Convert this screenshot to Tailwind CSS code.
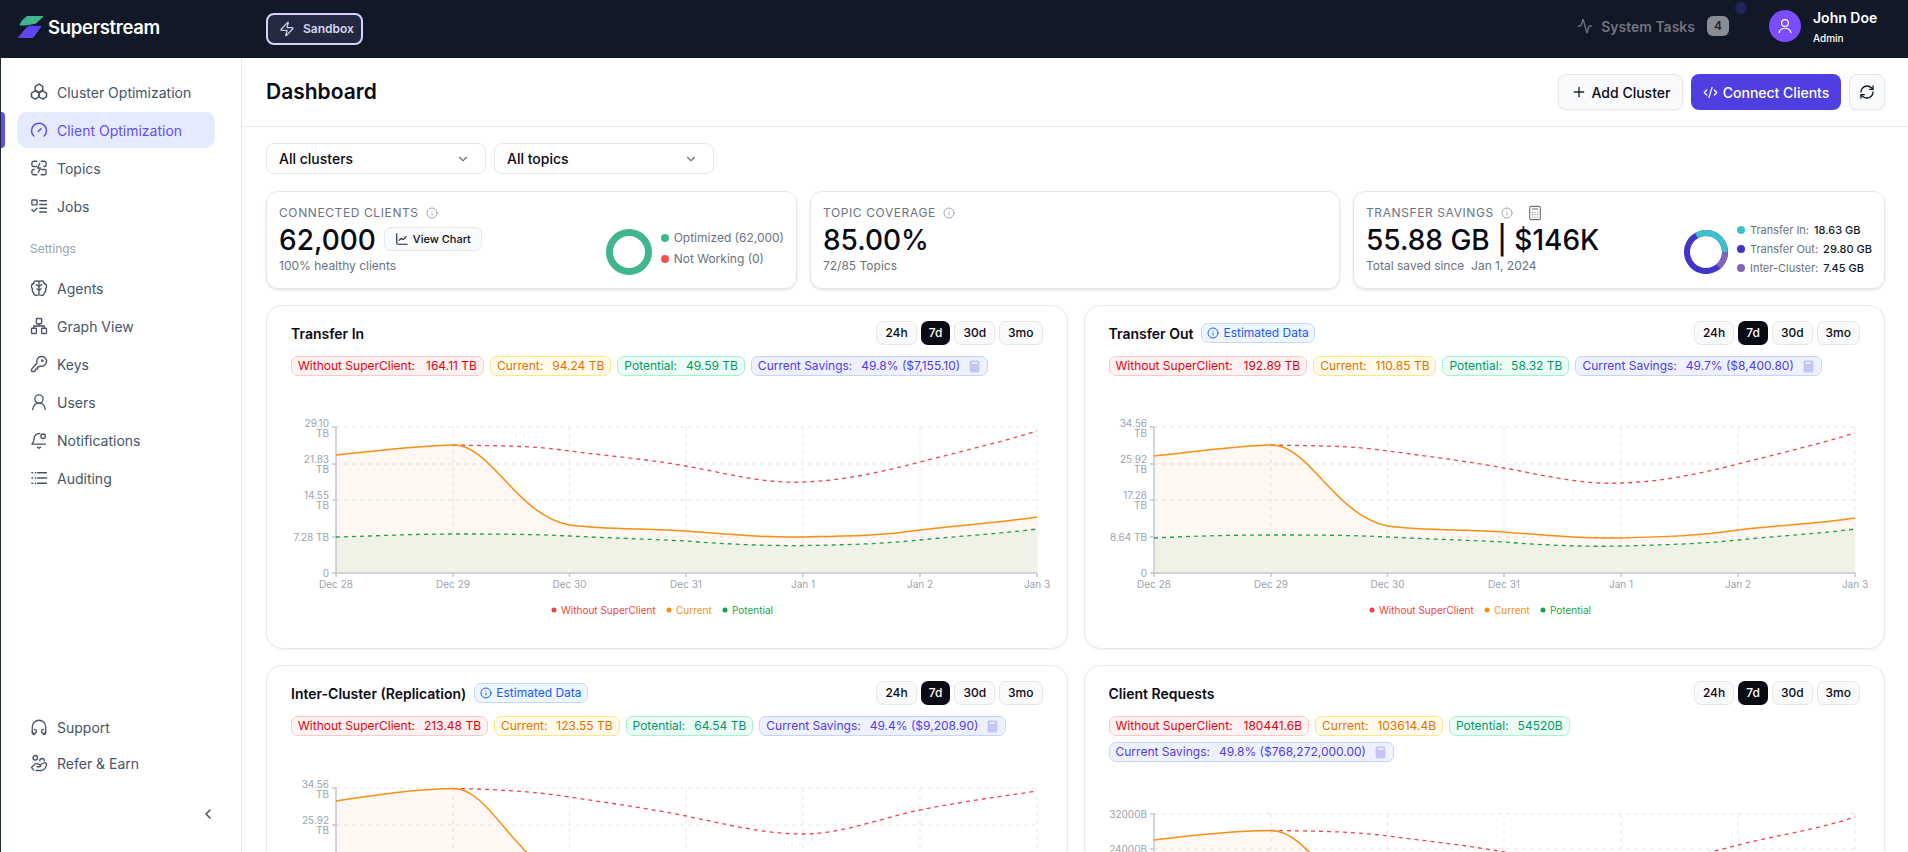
<!DOCTYPE html>
<html lang="en">
<head>
<meta charset="utf-8">
<title>Superstream Dashboard</title>
<script src="https://cdn.jsdelivr.net/npm/@tailwindcss/browser@4"></script>
</head>
<body class="overflow-hidden bg-white">
<div class="w-[1908px] h-[852px] overflow-hidden flex flex-col font-['Inter',sans-serif] text-[#0a0a14]">

<!-- Top bar -->
<header class="h-[58px] shrink-0 bg-[#111827] flex items-center relative">
  <div class="w-[266px] pl-[18px] pb-[5px] flex items-center gap-[4px]">
    <svg width="26" height="22" viewBox="0 0 26 22" stroke-width="1" stroke-linejoin="round"><path d="M9 .5H25L18 7L8 9H2L4 5Z" fill="#3fb68b" stroke="#3fb68b"/><path d="M11.500 10L23 10.500L15 21.500H.5L6 15L8 12.500Z" fill="#5f45f0" stroke="#5f45f0"/></svg>
    <span class="text-[18.500px] leading-[28px] font-semibold text-white tracking-[-0.3px]">Superstream</span>
  </div>
  <button class="w-[97px] h-[32px] rounded-[8px] border-2 border-[#d8d0fb] bg-[#232a40] flex items-center gap-[8px] pl-[11px] text-[12px] font-semibold text-[#d7d4f0]">
    <svg width="16" height="16" viewBox="0 0 24 24" fill="none" stroke="#d7d4f0" stroke-width="1.800" stroke-linecap="round" stroke-linejoin="round"><path d="M4 14a1 1 0 0 1-.78-1.630l9.900-10.200a.5.5 0 0 1 .86.460l-1.920 6.020A1 1 0 0 0 13 10h7a1 1 0 0 1 .78 1.630l-9.900 10.200a.5.5 0 0 1-.86-.460l1.920-6.020A1 1 0 0 0 11 14z"/></svg>
    Sandbox
  </button>
  <div class="ml-auto flex items-center pb-[6px]">
    <svg width="16" height="16" viewBox="0 0 24 24" fill="none" stroke="#6f737c" stroke-width="2" stroke-linecap="round" stroke-linejoin="round"><path d="M22 12h-2.480a2 2 0 0 0-1.930 1.460l-2.350 8.360a.25.25 0 0 1-.48 0L9.240 2.180a.25.25 0 0 0-.48 0l-2.350 8.360A2 2 0 0 1 4.490 12H2"/></svg>
    <span class="ml-[8px] text-[14px] font-semibold text-[#71757f]">System Tasks</span>
    <span class="ml-[12px] w-[22px] h-[20px] rounded-[6px] bg-[#8a8d93] text-[#1f2430] text-[12px] font-semibold flex items-center justify-center">4</span>
    <span class="ml-[40px] w-[32px] h-[32px] rounded-full bg-[#7c4dff] flex items-center justify-center">
      <svg width="18" height="18" viewBox="0 0 24 24" fill="none" stroke="#fff" stroke-width="1.600" stroke-linecap="round" stroke-linejoin="round"><circle cx="12" cy="8" r="4.500"/><path d="M4 21c1-4 4-6 8-6s7 2 8 6"/></svg>
    </span>
    <div class="ml-[12px] w-[95px] flex flex-col text-white">
      <span class="text-[14px] leading-[20px] font-semibold">John Doe</span>
      <span class="text-[10px] leading-[14px] mt-[3px] font-medium">Admin</span>
    </div>
  </div>
  <span class="absolute left-[1735px] top-[2px] w-[12px] h-[12px] rounded-full bg-[#1f2459]"></span>
</header>

<div class="flex-1 flex min-h-0">
  <!-- Sidebar -->
  <aside class="w-[242px] shrink-0 border-l border-l-[#1c2a2e] border-r border-r-[#e5e7eb] flex flex-col relative pt-[16px] text-[14px] text-[#475467]">
    <nav class="flex flex-col gap-[2px] ml-[16px] w-[198px]">
      <a class="h-[36px] flex items-center gap-[9px] px-[13px] rounded-[10px]">
        <svg width="18" height="18" viewBox="0 0 24 24" fill="none" stroke="#475467" stroke-width="2" stroke-linejoin="round"><path d="M12 1.500l5 2.900v5.200L12 12.500 7 9.600V4.400z"/><path d="M7 10.500l5 2.900v5.200l-5 2.900-5-2.900v-5.200z"/><path d="M17 10.500l5 2.900v5.200l-5 2.900-5-2.900v-5.200z"/></svg>
        <span>Cluster Optimization</span>
      </a>
      <a class="h-[36px] flex items-center gap-[9px] px-[13px] rounded-[10px] bg-[#e6eaff] text-[#5f4ff5]">
        <svg width="18" height="18" viewBox="0 0 24 24" fill="none" stroke="#5f4ff5" stroke-width="2" stroke-linecap="round"><path d="M5 20A10 10 0 1 1 19 20"/><path d="M11 14l3.500-3.500"/></svg>
        <span>Client Optimization</span>
      </a>
      <a class="h-[36px] flex items-center gap-[9px] px-[13px] rounded-[10px]">
        <svg width="18" height="18" viewBox="0 0 24 24" fill="none" stroke="#475467" stroke-width="1.800" stroke-linecap="round" stroke-linejoin="round"><path d="M9 3H5a2.500 2.500 0 0 0-2.500 2.500V8a2 2 0 0 0 2 2h4M15 3h4a2.500 2.500 0 0 1 2.500 2.500V8a2 2 0 0 1-2 2h-1M9 21H5a2.500 2.500 0 0 1-2.500-2.500V16a2 2 0 0 1 2-2h1M15 21h4a2.500 2.500 0 0 0 2.500-2.500V16a2 2 0 0 0-2-2h-4"/><path d="M13 6l-3 6h4l-3 6"/></svg>
        <span>Topics</span>
      </a>
      <a class="h-[36px] flex items-center gap-[9px] px-[13px] rounded-[10px]">
        <svg width="18" height="18" viewBox="0 0 24 24" fill="none" stroke="#475467" stroke-width="1.800" stroke-linecap="round" stroke-linejoin="round"><rect x="2.500" y="4" width="7" height="6.500" rx="1"/><path d="M13 5h9M13 10h9M13 15h9M13 20h9M2.500 17l2.500 2.500L9.500 15"/></svg>
        <span>Jobs</span>
      </a>
    </nav>
    <div class="mx-[29px] mt-[17px] h-[16px] leading-[16px] text-[12px] text-[#98a2b3]">Settings</div>
    <nav class="flex flex-col gap-[2px] ml-[16px] w-[198px] mt-[13px]">
      <a class="h-[36px] flex items-center gap-[9px] px-[13px] rounded-[10px]">
        <svg width="18" height="18" viewBox="0 0 24 24" fill="none" stroke="#475467" stroke-width="1.800" stroke-linecap="round" stroke-linejoin="round"><path d="M12 3v18M8 2.500a3.500 3.500 0 0 0-3 3.500 4 4 0 0 0-3 4c0 1.500.6 2.500 1.500 3A4 4 0 0 0 5 18.500 3.500 3.500 0 0 0 8 22c2 0 4-1 4-1s2 1 4 1a3.500 3.500 0 0 0 3-3.500 4 4 0 0 0 1.500-5.500c.9-.5 1.500-1.500 1.500-3a4 4 0 0 0-3-4 3.500 3.500 0 0 0-3-3.500c-2 0-4 .5-4 .5s-2-.5-4-.5z"/><path d="M12 10L8.500 7.500M12 10l3.500-2.500M12 15l-3-2M12 15l3-2"/></svg>
        <span>Agents</span>
      </a>
      <a class="h-[36px] flex items-center gap-[9px] px-[13px] rounded-[10px]">
        <svg width="18" height="18" viewBox="0 0 24 24" fill="none" stroke="#475467" stroke-width="1.800" stroke-linecap="round" stroke-linejoin="round"><rect x="8.500" y="2" width="7" height="7" rx="1"/><rect x="2" y="15" width="6.500" height="7" rx="1"/><rect x="15.500" y="15" width="6.500" height="7" rx="1"/><path d="M5 15v-3h14v3M12 12V9"/></svg>
        <span>Graph View</span>
      </a>
      <a class="h-[36px] flex items-center gap-[9px] px-[13px] rounded-[10px]">
        <svg width="18" height="18" viewBox="0 0 24 24" fill="none" stroke="#475467" stroke-width="1.800" stroke-linecap="round" stroke-linejoin="round"><path d="M2.600 18.400A2 2 0 0 0 2 19.800V21a1 1 0 0 0 1 1h3a1 1 0 0 0 1-1v-1a1 1 0 0 1 1-1h1a1 1 0 0 0 1-1v-1a1 1 0 0 1 1-1h.2a2 2 0 0 0 1.400-.6l.8-.8a6.500 6.500 0 1 0-4-4z"/><circle cx="16.500" cy="7.500" r=".8"/></svg>
        <span>Keys</span>
      </a>
      <a class="h-[36px] flex items-center gap-[9px] px-[13px] rounded-[10px]">
        <svg width="18" height="18" viewBox="0 0 24 24" fill="none" stroke="#475467" stroke-width="1.800" stroke-linecap="round" stroke-linejoin="round"><circle cx="12" cy="8" r="5.500"/><path d="M3.500 22c.7-5 4-8.500 8.500-8.500s7.800 3.500 8.500 8.500"/></svg>
        <span>Users</span>
      </a>
      <a class="h-[36px] flex items-center gap-[9px] px-[13px] rounded-[10px]">
        <svg width="18" height="18" viewBox="0 0 24 24" fill="none" stroke="#475467" stroke-width="1.800" stroke-linecap="round" stroke-linejoin="round"><path d="M13 3.500a6.500 6.500 0 0 0-7.500 6.500c0 4.500-2 6-3 7.500h18"/><circle cx="17.500" cy="7" r="3"/><path d="M10 21.500l2 1.500 2-1.500"/></svg>
        <span>Notifications</span>
      </a>
      <a class="h-[36px] flex items-center gap-[9px] px-[13px] rounded-[10px]">
        <svg width="18" height="18" viewBox="0 0 24 24" fill="none" stroke="#475467" stroke-width="1.800" stroke-linecap="round"><path d="M10 5h12M10 12h12M10 19h12M2.500 5h1M7 5h.5M2.500 12h1M7 12h.5M2.500 19h1M7 19h.5"/></svg>
        <span>Auditing</span>
      </a>
    </nav>
    <nav class="flex flex-col mt-auto ml-[16px] w-[198px] mb-[30px]">
      <a class="h-[36px] flex items-center gap-[9px] px-[13px] rounded-[10px]">
        <svg width="18" height="18" viewBox="0 0 24 24" fill="none" stroke="#475467" stroke-width="1.700" stroke-linecap="round"><path d="M3 19v-7a9 9 0 0 1 18 0v7"/><path d="M3 18a2.800 2.800 0 1 0 2.800-2.800M3 19c0 1.500 1 3 3 3M21 18a2.800 2.800 0 1 1-2.800-2.800M21 19c0 1.500-1 3-3 3"/></svg>
        <span>Support</span>
      </a>
      <a class="h-[36px] flex items-center gap-[9px] px-[13px] rounded-[10px]">
        <svg width="18" height="18" viewBox="0 0 24 24" fill="none" stroke="#475467" stroke-width="1.800" stroke-linecap="round" stroke-linejoin="round"><circle cx="7" cy="5" r="3"/><path d="M2 18l3.500-3.500c1.500-1.500 4-2 6-1l2 1c1.200.6.800 2.500-.7 2.500H9.500M5 21.500l-3-3.500M8 22h7c3 0 7-4 7-8 0-2-2-3-4-2l-3 1.500"/><path d="M13 9a3 3 0 0 1 6 0"/></svg>
        <span>Refer &amp; Earn</span>
      </a>
      <div class="flex justify-end mt-[25px] h-[16px]">
        <svg class="mr-[-1px]" width="16" height="16" viewBox="0 0 24 24" fill="none" stroke="#475467" stroke-width="2.400" stroke-linecap="round" stroke-linejoin="round"><path d="m15 18-6-6 6-6"/></svg>
      </div>
    </nav>
    <span class="absolute left-0 top-[54px] w-[4px] h-[36px] rounded-r-[4px] bg-[#5f4ff5]"></span>
  </aside>

  <!-- Main -->
  <main class="flex-1 min-w-0 overflow-hidden">
    <div class="h-[69px] border-b border-[#e5e7eb] pl-[24px] pr-[23px] flex items-center justify-between">
      <h1 class="text-[21px] font-semibold leading-[32px]">Dashboard</h1>
      <div class="flex items-center gap-[8px]">
        <button class="h-[36px] w-[125px] rounded-[8px] border border-[#e5e7eb] bg-[#f9fafb] shadow-xs flex items-center justify-center gap-[5px] text-[14px] font-medium">
          <svg width="16" height="16" viewBox="0 0 24 24" fill="none" stroke="#1f2430" stroke-width="2" stroke-linecap="round"><path d="M5 12h14M12 5v14"/></svg>Add Cluster
        </button>
        <button class="h-[36px] w-[150px] rounded-[8px] bg-[#4f3fe0] flex items-center justify-center gap-[5px] text-[14px] font-medium text-white">
          <svg width="15" height="15" viewBox="0 0 24 24" fill="none" stroke="#fff" stroke-width="2" stroke-linecap="round" stroke-linejoin="round"><path d="m18 16 4-4-4-4M6 8l-4 4 4 4M14.500 4l-5 16"/></svg>Connect Clients
        </button>
        <button class="h-[36px] w-[36px] rounded-[8px] border border-[#e5e7eb] bg-[#f9fafb] shadow-xs flex items-center justify-center">
          <svg width="16" height="16" viewBox="0 0 24 24" fill="none" stroke="#111827" stroke-width="2" stroke-linecap="round" stroke-linejoin="round"><path d="M3 12a9 9 0 0 1 9-9 9.750 9.750 0 0 1 6.740 2.740L21 8"/><path d="M21 3v5h-5"/><path d="M21 12a9 9 0 0 1-9 9 9.750 9.750 0 0 1-6.740-2.740L3 16"/><path d="M8 16H3v5"/></svg>
        </button>
      </div>
    </div>

    <div class="pl-[24px] pr-[23px] pt-[16px]">
      <!-- Filters -->
      <div class="flex gap-[8px]">
        <button class="w-[220px] h-[31px] rounded-[8px] border border-[#e5e7eb] flex items-center justify-between pl-[12px] pr-[15px] text-[14px] font-medium">All clusters
          <svg width="14" height="14" viewBox="0 0 24 24" fill="none" stroke="#6b7280" stroke-width="2" stroke-linecap="round" stroke-linejoin="round"><path d="m6 9 6 6 6-6"/></svg>
        </button>
        <button class="w-[220px] h-[31px] rounded-[8px] border border-[#e5e7eb] flex items-center justify-between pl-[12px] pr-[15px] text-[14px] font-medium">All topics
          <svg width="14" height="14" viewBox="0 0 24 24" fill="none" stroke="#6b7280" stroke-width="2" stroke-linecap="round" stroke-linejoin="round"><path d="m6 9 6 6 6-6"/></svg>
        </button>
      </div>

      <!-- Stat cards -->
      <div class="grid grid-cols-[531px_530px_1fr] gap-[13px] mt-[17px]">
        <div class="h-[98px] rounded-[12px] border border-[#e5e7eb] shadow-sm px-[12px] pt-[13px] flex justify-between">
          <div>
            <div class="flex items-center gap-[7px] h-[16px] text-[12px] tracking-[0.6px] text-[#6b7280]">CONNECTED CLIENTS
              <svg width="12" height="12" viewBox="0 0 24 24" fill="none" stroke="#9ca3af" stroke-width="2" stroke-linecap="round"><circle cx="12" cy="12" r="10"/><path d="M12 16v-4M12 8h.01"/></svg>
            </div>
            <div class="flex items-center mt-[1px] h-[36px]">
              <span class="text-[28px] leading-[36px] font-medium">62,000</span>
              <button class="ml-[8px] mb-[2px] w-[98px] h-[24px] rounded-[7px] border border-[#e5e7eb] bg-[#f9fafb] flex items-center justify-center gap-[4px] text-[11px] font-medium">
                <svg width="14" height="14" viewBox="0 0 24 24" fill="none" stroke="#1f2430" stroke-width="2" stroke-linecap="round" stroke-linejoin="round"><path d="M3 3v16a2 2 0 0 0 2 2h16"/><path d="m7 14 4-3 3 2 5-5"/></svg>View Chart
              </button>
            </div>
            <div class="text-[12px] leading-[16px] text-[#6b7280]">100% healthy clients</div>
          </div>
          <div class="flex items-center gap-[9px] mb-[9px]">
            <svg width="46" height="46" viewBox="0 0 46 46" class="mt-[19px]"><circle cx="23" cy="23" r="19.500" fill="none" stroke="#3fb68b" stroke-width="7"/></svg>
            <div class="flex flex-col gap-[5px] text-[12px] leading-[16px] text-[#6b7280] mt-[13px]">
              <div class="flex items-center gap-[5px]"><span class="w-[8px] h-[8px] rounded-full bg-[#3fb68b]"></span>Optimized (62,000)</div>
              <div class="flex items-center gap-[5px]"><span class="w-[8px] h-[8px] rounded-full bg-[#ef5350]"></span>Not Working (0)</div>
            </div>
          </div>
        </div>

        <div class="h-[98px] rounded-[12px] border border-[#e5e7eb] shadow-sm px-[12px] pt-[13px]">
          <div class="flex items-center gap-[7px] h-[16px] text-[12px] tracking-[0.6px] text-[#6b7280]">TOPIC COVERAGE
            <svg width="12" height="12" viewBox="0 0 24 24" fill="none" stroke="#9ca3af" stroke-width="2" stroke-linecap="round"><circle cx="12" cy="12" r="10"/><path d="M12 16v-4M12 8h.01"/></svg>
          </div>
          <div class="mt-[1px] text-[28px] leading-[36px] font-medium">85.00%</div>
          <div class="text-[12px] leading-[16px] text-[#6b7280]">72/85 Topics</div>
        </div>

        <div class="h-[98px] rounded-[12px] border border-[#e5e7eb] shadow-sm px-[12px] pt-[13px] flex justify-between">
          <div>
            <div class="flex items-center h-[16px] text-[12px] tracking-[0.6px] text-[#6b7280]">TRANSFER SAVINGS
              <svg class="ml-[7px]" width="12" height="12" viewBox="0 0 24 24" fill="none" stroke="#9ca3af" stroke-width="2" stroke-linecap="round"><circle cx="12" cy="12" r="10"/><path d="M12 16v-4M12 8h.01"/></svg>
              <svg class="ml-[14px]" width="16" height="16" viewBox="0 0 24 24" fill="none" stroke="#6b7280" stroke-width="1.700" stroke-linecap="round" stroke-linejoin="round"><rect x="4" y="2" width="16" height="20" rx="2"/><path d="M8 6h8M8 11h.01M12 11h.01M16 11h.01M8 14.500h.01M12 14.500h.01M16 14.500h.01M8 18h.01M12 18h.01M16 18h.01"/></svg>
            </div>
            <div class="mt-[1px] text-[28px] leading-[36px] font-medium">55.88 GB | $146K</div>
            <div class="text-[12px] leading-[16px] text-[#6b7280]">Total saved since&nbsp; Jan 1, 2024</div>
          </div>
          <div class="flex items-center gap-[9px] mb-[9px]">
            <svg width="44" height="44" viewBox="0 0 44 44" class="mt-[19px]">
              <g fill="none" stroke-width="6" transform="rotate(-120 22 22)">
                <circle cx="22" cy="22" r="19" stroke="#3f35c9"/>
                <circle cx="22" cy="22" r="19" stroke="#3cc1c8" stroke-dasharray="39.800 119.400"/>
                <circle cx="22" cy="22" r="19" stroke="#8463bf" stroke-dasharray="15.900 119.400" stroke-dashoffset="-39.800"/>
              </g>
            </svg>
            <div class="flex flex-col gap-[3px] text-[11px] leading-[16px] text-[#6b7280] mt-[13px]">
              <div class="flex items-center gap-[5px]"><span class="w-[8px] h-[8px] rounded-full bg-[#3cc1c8]"></span>Transfer In: <b class="font-medium text-[#111827]">18.63 GB</b></div>
              <div class="flex items-center gap-[5px]"><span class="w-[8px] h-[8px] rounded-full bg-[#3f35c9]"></span>Transfer Out: <b class="font-medium text-[#111827]">29.80 GB</b></div>
              <div class="flex items-center gap-[5px]"><span class="w-[8px] h-[8px] rounded-full bg-[#8463bf]"></span>Inter-Cluster: <b class="font-medium text-[#111827]">7.45 GB</b></div>
            </div>
          </div>
        </div>
      </div>

      <!-- Chart cards -->
      <div class="grid grid-cols-2 gap-[16px] mt-[16px]">

        <!-- Transfer In -->
        <section class="rounded-[16px] border border-[#e5e7eb] shadow-xs px-[24px] pt-[15px] pb-[18px]">
          <div class="flex items-center justify-between h-[24px]">
            <h2 class="text-[14px] font-semibold">Transfer In</h2>
            <div class="flex gap-[4px] text-[12px] font-medium">
              <span class="h-[24px] px-[8px] rounded-[7px] border border-[#e5e7eb] bg-[#f9fafb] flex items-center">24h</span>
              <span class="h-[24px] px-[8px] rounded-[7px] bg-[#0a0a14] text-white flex items-center">7d</span>
              <span class="h-[24px] px-[8px] rounded-[7px] border border-[#e5e7eb] bg-[#f9fafb] flex items-center">30d</span>
              <span class="h-[24px] px-[8px] rounded-[7px] border border-[#e5e7eb] bg-[#f9fafb] flex items-center">3mo</span>
            </div>
          </div>
          <div class="flex flex-wrap gap-[6px] mt-[11px] text-[12px]">
            <span class="h-[20px] px-[6px] rounded-[7px] border border-red-200 bg-red-50 text-red-600 flex items-center gap-[11px]">Without SuperClient: <span>164.11 TB</span></span>
            <span class="h-[20px] px-[6px] rounded-[7px] border border-amber-200 bg-amber-50 text-amber-600 flex items-center gap-[9px]">Current: <span>94.24 TB</span></span>
            <span class="h-[20px] px-[6px] rounded-[7px] border border-emerald-200 bg-emerald-50 text-emerald-600 flex items-center gap-[9px]">Potential: <span>49.59 TB</span></span>
            <span class="h-[20px] px-[6px] rounded-[7px] border border-indigo-200 bg-indigo-50 text-indigo-600 flex items-center gap-[9px]">Current Savings: <span>49.8% ($7,155.10)</span>
              <svg width="13" height="13" viewBox="0 0 24 24" class="ml-[-1px]"><rect x="3" y="1" width="18" height="22" rx="3" fill="#c3c6f5"/><rect x="7" y="4" width="10" height="3" fill="#eef2ff"/></svg></span>
          </div>
          <svg class="block overflow-visible mt-[14px]" width="752" height="240" viewBox="0 0 752 240" font-size="10" fill="#9ca3af">
            <g stroke="#e5e7eb" stroke-dasharray="4 4"><path d="M45 37H746M45 74H746M45 110H746M45 147H746M162 37V183M278.500 37V183M395 37V183M512 37V183M629 37V183M746 37V183"/></g>
            <path d="M45 65C84 61 123 56 162 55C200 54 225 125 278.500 135C317 140 356 138 395 141C434 144 473 148 512 147C551 146 590 146 629 140C668 135 707 133 746 127V183H45Z" fill="#fb923c" fill-opacity=".07"/>
            <path d="M45 147C84 146 123 144 162 144C201 144 240 144 278.500 146C317 148 356 149 395 151C434 154 473 156 512 155.500C551 155 590 154 629 150C668 146 707 144 746 139V183H45Z" fill="#f0f2e5"/>
            <path d="M41 37H45V183M41 74H45M41 110H45M41 147H45M41 183H746M45 183V187M162 183V187M278.500 183V187M395 183V187M512 183V187M629 183V187M746 183V187" fill="none" stroke="#c3c8d0" stroke-width="1.500"/>
            <path d="M162 55C201 56 240 55 278.500 61C317 66 356 69 395 76C434 83 473 94 512 92C551 91 590 82 629 72C668 62 707 53 746 41" fill="none" stroke="#ef4444" stroke-width="1.300" stroke-dasharray="4 4"/>
            <path d="M45 147C84 146 123 144 162 144C201 144 240 144 278.500 146C317 148 356 149 395 151C434 154 473 156 512 155.500C551 155 590 154 629 150C668 146 707 144 746 139" fill="none" stroke="#16a34a" stroke-width="1.300" stroke-dasharray="4 4"/>
            <path d="M45 65C84 61 123 56 162 55C200 54 225 125 278.500 135C317 140 356 138 395 141C434 144 473 148 512 147C551 146 590 146 629 140C668 135 707 133 746 127" fill="none" stroke="#f59012" stroke-width="1.500"/>
            <g text-anchor="end"><text x="38" y="37">29.10</text><text x="38" y="47">TB</text><text x="38" y="73">21.83</text><text x="38" y="83">TB</text><text x="38" y="109">14.55</text><text x="38" y="119">TB</text><text x="38" y="151">7.28 TB</text><text x="38" y="187">0</text></g>
            <g text-anchor="middle"><text x="45" y="198">Dec 28</text><text x="162" y="198">Dec 29</text><text x="278.500" y="198">Dec 30</text><text x="395" y="198">Dec 31</text><text x="512" y="198">Jan 1</text><text x="629" y="198">Jan 2</text><text x="746" y="198">Jan 3</text></g>
            <circle cx="263" cy="220" r="2.500" fill="#ef4444"/><text x="270" y="224" fill="#ef4444">Without SuperClient</text>
            <circle cx="378" cy="220" r="2.500" fill="#f59012"/><text x="385" y="224" fill="#f59012">Current</text>
            <circle cx="434" cy="220" r="2.500" fill="#16a34a"/><text x="441" y="224" fill="#16a34a">Potential</text>
          </svg>
        </section>

        <!-- Transfer Out -->
        <section class="rounded-[16px] border border-[#e5e7eb] shadow-xs px-[24px] pt-[15px] pb-[18px]">
          <div class="flex items-center justify-between h-[24px]">
            <div class="flex items-center gap-[8px]">
              <h2 class="text-[14px] font-semibold">Transfer Out</h2>
              <span class="h-[20px] px-[5px] rounded-[7px] border border-blue-200 bg-blue-50 text-blue-600 text-[12px] flex items-center gap-[4px]">
                <svg width="12" height="12" viewBox="0 0 24 24" fill="none" stroke="currentColor" stroke-width="2" stroke-linecap="round"><circle cx="12" cy="12" r="10"/><path d="M12 16v-4M12 8h.01"/></svg>Estimated Data</span>
            </div>
            <div class="flex gap-[4px] text-[12px] font-medium">
              <span class="h-[24px] px-[8px] rounded-[7px] border border-[#e5e7eb] bg-[#f9fafb] flex items-center">24h</span>
              <span class="h-[24px] px-[8px] rounded-[7px] bg-[#0a0a14] text-white flex items-center">7d</span>
              <span class="h-[24px] px-[8px] rounded-[7px] border border-[#e5e7eb] bg-[#f9fafb] flex items-center">30d</span>
              <span class="h-[24px] px-[8px] rounded-[7px] border border-[#e5e7eb] bg-[#f9fafb] flex items-center">3mo</span>
            </div>
          </div>
          <div class="flex flex-wrap gap-[6px] mt-[11px] text-[12px]">
            <span class="h-[20px] px-[6px] rounded-[7px] border border-red-200 bg-red-50 text-red-600 flex items-center gap-[11px]">Without SuperClient: <span>192.89 TB</span></span>
            <span class="h-[20px] px-[6px] rounded-[7px] border border-amber-200 bg-amber-50 text-amber-600 flex items-center gap-[9px]">Current: <span>110.85 TB</span></span>
            <span class="h-[20px] px-[6px] rounded-[7px] border border-emerald-200 bg-emerald-50 text-emerald-600 flex items-center gap-[9px]">Potential: <span>58.32 TB</span></span>
            <span class="h-[20px] px-[6px] rounded-[7px] border border-indigo-200 bg-indigo-50 text-indigo-600 flex items-center gap-[9px]">Current Savings: <span>49.7% ($8,400.80)</span>
              <svg width="13" height="13" viewBox="0 0 24 24" class="ml-[-1px]"><rect x="3" y="1" width="18" height="22" rx="3" fill="#c3c6f5"/><rect x="7" y="4" width="10" height="3" fill="#eef2ff"/></svg></span>
          </div>
          <svg class="block overflow-visible mt-[14px]" width="752" height="240" viewBox="0 0 752 240" font-size="10" fill="#9ca3af">
            <g stroke="#e5e7eb" stroke-dasharray="4 4"><path d="M45 37H746M45 74H746M45 110H746M45 147H746M162 37V183M278.500 37V183M395 37V183M512 37V183M629 37V183M746 37V183"/></g>
            <path d="M45 66C84 62 123 56 162 55C200 54 225 125 278.500 136C317 141 356 139 395 142C434 145 473 149 512 148C551 147 590 146 629 140C668 135 707 134 746 128V183H45Z" fill="#fb923c" fill-opacity=".07"/>
            <path d="M45 148C84 146 123 145 162 145C201 145 240 145 278.500 147C317 149 356 150 395 152C434 155 473 157 512 156C551 155 590 154 629 150C668 146 707 144 746 139V183H45Z" fill="#f0f2e5"/>
            <path d="M41 37H45V183M41 74H45M41 110H45M41 147H45M41 183H746M45 183V187M162 183V187M278.500 183V187M395 183V187M512 183V187M629 183V187M746 183V187" fill="none" stroke="#c3c8d0" stroke-width="1.500"/>
            <path d="M162 55C201 56 240 55 278.500 61C317 66 356 71 395 78C434 85 473 95 512 93C551 92 590 84 629 74C668 64 707 55 746 43" fill="none" stroke="#ef4444" stroke-width="1.300" stroke-dasharray="4 4"/>
            <path d="M45 148C84 146 123 145 162 145C201 145 240 145 278.500 147C317 149 356 150 395 152C434 155 473 157 512 156C551 155 590 154 629 150C668 146 707 144 746 139" fill="none" stroke="#16a34a" stroke-width="1.300" stroke-dasharray="4 4"/>
            <path d="M45 66C84 62 123 56 162 55C200 54 225 125 278.500 136C317 141 356 139 395 142C434 145 473 149 512 148C551 147 590 146 629 140C668 135 707 134 746 128" fill="none" stroke="#f59012" stroke-width="1.500"/>
            <g text-anchor="end"><text x="38" y="37">34.56</text><text x="38" y="47">TB</text><text x="38" y="73">25.92</text><text x="38" y="83">TB</text><text x="38" y="109">17.28</text><text x="38" y="119">TB</text><text x="38" y="151">8.64 TB</text><text x="38" y="187">0</text></g>
            <g text-anchor="middle"><text x="45" y="198">Dec 28</text><text x="162" y="198">Dec 29</text><text x="278.500" y="198">Dec 30</text><text x="395" y="198">Dec 31</text><text x="512" y="198">Jan 1</text><text x="629" y="198">Jan 2</text><text x="746" y="198">Jan 3</text></g>
            <circle cx="263" cy="220" r="2.500" fill="#ef4444"/><text x="270" y="224" fill="#ef4444">Without SuperClient</text>
            <circle cx="378" cy="220" r="2.500" fill="#f59012"/><text x="385" y="224" fill="#f59012">Current</text>
            <circle cx="434" cy="220" r="2.500" fill="#16a34a"/><text x="441" y="224" fill="#16a34a">Potential</text>
          </svg>
        </section>

        <!-- Inter-Cluster -->
        <section class="rounded-[16px] border border-[#e5e7eb] shadow-xs px-[24px] pt-[15px] pb-[18px]">
          <div class="flex items-center justify-between h-[24px]">
            <div class="flex items-center gap-[8px]">
              <h2 class="text-[14px] font-semibold">Inter-Cluster (Replication)</h2>
              <span class="h-[20px] px-[5px] rounded-[7px] border border-blue-200 bg-blue-50 text-blue-600 text-[12px] flex items-center gap-[4px]">
                <svg width="12" height="12" viewBox="0 0 24 24" fill="none" stroke="currentColor" stroke-width="2" stroke-linecap="round"><circle cx="12" cy="12" r="10"/><path d="M12 16v-4M12 8h.01"/></svg>Estimated Data</span>
            </div>
            <div class="flex gap-[4px] text-[12px] font-medium">
              <span class="h-[24px] px-[8px] rounded-[7px] border border-[#e5e7eb] bg-[#f9fafb] flex items-center">24h</span>
              <span class="h-[24px] px-[8px] rounded-[7px] bg-[#0a0a14] text-white flex items-center">7d</span>
              <span class="h-[24px] px-[8px] rounded-[7px] border border-[#e5e7eb] bg-[#f9fafb] flex items-center">30d</span>
              <span class="h-[24px] px-[8px] rounded-[7px] border border-[#e5e7eb] bg-[#f9fafb] flex items-center">3mo</span>
            </div>
          </div>
          <div class="flex flex-wrap gap-[6px] mt-[11px] text-[12px]">
            <span class="h-[20px] px-[6px] rounded-[7px] border border-red-200 bg-red-50 text-red-600 flex items-center gap-[9px]">Without SuperClient: <span>213.48 TB</span></span>
            <span class="h-[20px] px-[6px] rounded-[7px] border border-amber-200 bg-amber-50 text-amber-600 flex items-center gap-[9px]">Current: <span>123.55 TB</span></span>
            <span class="h-[20px] px-[6px] rounded-[7px] border border-emerald-200 bg-emerald-50 text-emerald-600 flex items-center gap-[9px]">Potential: <span>64.54 TB</span></span>
            <span class="h-[20px] px-[6px] rounded-[7px] border border-indigo-200 bg-indigo-50 text-indigo-600 flex items-center gap-[9px]">Current Savings: <span>49.4% ($9,208.90)</span>
              <svg width="13" height="13" viewBox="0 0 24 24" class="ml-[-1px]"><rect x="3" y="1" width="18" height="22" rx="3" fill="#c3c6f5"/><rect x="7" y="4" width="10" height="3" fill="#eef2ff"/></svg></span>
          </div>
          <svg class="block overflow-visible mt-[15px]" width="752" height="240" viewBox="0 0 752 240" font-size="10" fill="#9ca3af">
            <g stroke="#e5e7eb" stroke-dasharray="4 4"><path d="M45 37H746M45 74H746M45 110H746M45 147H746M162 37V183M278.500 37V183M395 37V183M512 37V183M629 37V183M746 37V183"/></g>
            <path d="M45 50C84 44 123 38 162 37.500C200 37 225 115 278.500 128V183H45Z" fill="#fb923c" fill-opacity=".07"/>
            <path d="M41 37H45V183M41 74H45M41 110H45" fill="none" stroke="#c3c8d0" stroke-width="1.500"/>
            <path d="M162 37.500C201 38 240 40 278.500 46C317 52 356 57 395 65C434 73 473 83 512 83C551 83 590 67 629 59C668 51 707 46 746 40" fill="none" stroke="#ef4444" stroke-width="1.300" stroke-dasharray="4 4"/>
            <path d="M45 50C84 44 123 38 162 37.500C200 37 225 115 278.500 128" fill="none" stroke="#f59012" stroke-width="1.500"/>
            <g text-anchor="end"><text x="38" y="37">34.56</text><text x="38" y="47">TB</text><text x="38" y="73">25.92</text><text x="38" y="83">TB</text><text x="38" y="109">17.28</text><text x="38" y="119">TB</text></g>
          </svg>
        </section>

        <!-- Client Requests -->
        <section class="rounded-[16px] border border-[#e5e7eb] shadow-xs px-[24px] pt-[15px] pb-[18px]">
          <div class="flex items-center justify-between h-[24px]">
            <h2 class="text-[14px] font-semibold">Client Requests</h2>
            <div class="flex gap-[4px] text-[12px] font-medium">
              <span class="h-[24px] px-[8px] rounded-[7px] border border-[#e5e7eb] bg-[#f9fafb] flex items-center">24h</span>
              <span class="h-[24px] px-[8px] rounded-[7px] bg-[#0a0a14] text-white flex items-center">7d</span>
              <span class="h-[24px] px-[8px] rounded-[7px] border border-[#e5e7eb] bg-[#f9fafb] flex items-center">30d</span>
              <span class="h-[24px] px-[8px] rounded-[7px] border border-[#e5e7eb] bg-[#f9fafb] flex items-center">3mo</span>
            </div>
          </div>
          <div class="flex flex-wrap gap-[6px] mt-[11px] w-[560px] text-[12px]">
            <span class="h-[20px] px-[6px] rounded-[7px] border border-red-200 bg-red-50 text-red-600 flex items-center gap-[11px]">Without SuperClient: <span>180441.6B</span></span>
            <span class="h-[20px] px-[6px] rounded-[7px] border border-amber-200 bg-amber-50 text-amber-600 flex items-center gap-[9px]">Current: <span>103614.4B</span></span>
            <span class="h-[20px] px-[6px] rounded-[7px] border border-emerald-200 bg-emerald-50 text-emerald-600 flex items-center gap-[9px]">Potential: <span>54520B</span></span>
            <span class="h-[20px] px-[6px] rounded-[7px] border border-indigo-200 bg-indigo-50 text-indigo-600 flex items-center gap-[9px]">Current Savings: <span>49.8% ($768,272,000.00)</span>
              <svg width="13" height="13" viewBox="0 0 24 24" class="ml-[-1px]"><rect x="3" y="1" width="18" height="22" rx="3" fill="#c3c6f5"/><rect x="7" y="4" width="10" height="3" fill="#eef2ff"/></svg></span>
          </div>
          <svg class="block overflow-visible mt-[15px]" width="752" height="240" viewBox="0 0 752 240" font-size="10" fill="#9ca3af">
            <g stroke="#e5e7eb" stroke-dasharray="4 4"><path d="M45 37H746M45 72H746M162 37V183M278.500 37V183M395 37V183M512 37V183M629 37V183M746 37V183"/></g>
            <path d="M45 63C84 58 123 54 162 53.500C200 53 225 125 278.500 135V183H45Z" fill="#fb923c" fill-opacity=".07"/>
            <path d="M41 37H45V183M41 72H45" fill="none" stroke="#c3c8d0" stroke-width="1.500"/>
            <path d="M162 53.500C201 54 240 54 278.500 59C317 64 356 68 395 75C434 82 473 92 512 91C551 90 590 78 629 68C668 58 707 53 746 40" fill="none" stroke="#ef4444" stroke-width="1.300" stroke-dasharray="4 4"/>
            <path d="M45 63C84 58 123 54 162 53.500C200 53 225 125 278.500 135" fill="none" stroke="#f59012" stroke-width="1.500"/>
            <g text-anchor="end"><text x="38" y="41">32000B</text><text x="38" y="76">24000B</text></g>
          </svg>
        </section>
      </div>
    </div>
  </main>
</div>
</div>
</body>
</html>
